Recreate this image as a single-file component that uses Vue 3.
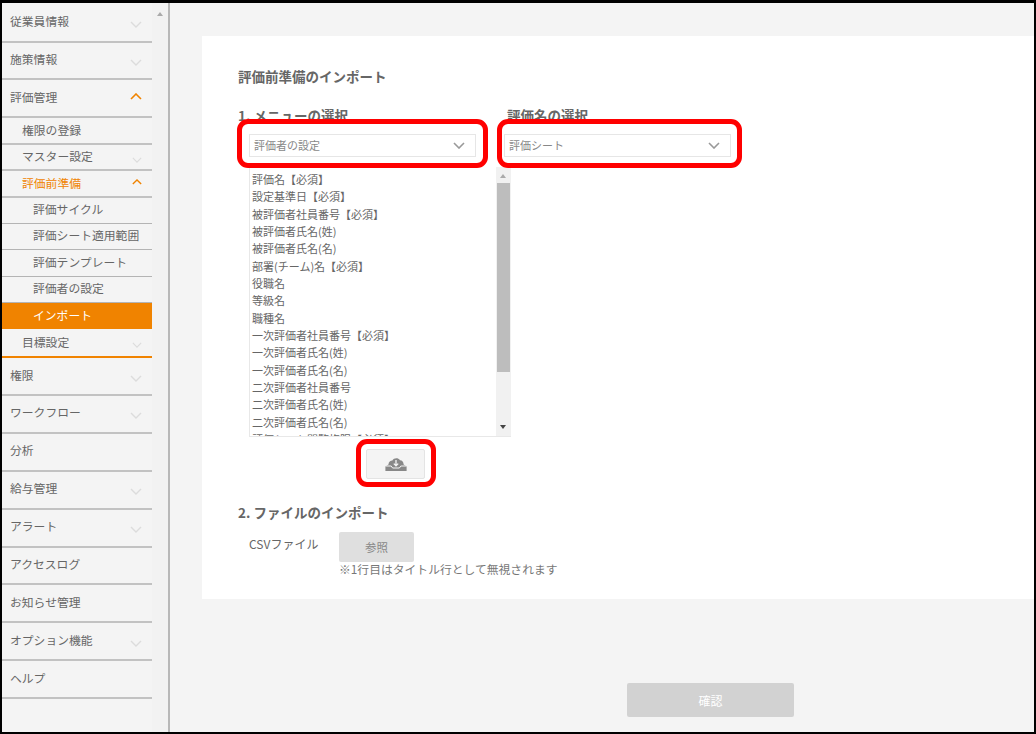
<script setup>
const fields = [
  '評価名【必須】', '設定基準日【必須】', '被評価者社員番号【必須】', '被評価者氏名(姓)', '被評価者氏名(名)',
  '部署(チーム)名【必須】', '役職名', '等級名', '職種名', '一次評価者社員番号【必須】',
  '一次評価者氏名(姓)', '一次評価者氏名(名)', '二次評価者社員番号', '二次評価者氏名(姓)', '二次評価者氏名(名)',
  '評価シート閲覧権限【必須】'
]
const nav = [
  { label: '従業員情報', level: 'top', chev: 'down' },
  { label: '施策情報', level: 'top', chev: 'down' },
  { label: '評価管理', level: 'top', chev: 'up' },
  { label: '権限の登録', level: 'sub' },
  { label: 'マスター設定', level: 'sub', chev: 'down' },
  { label: '評価前準備', level: 'sub', chev: 'up', accent: true },
  { label: '評価サイクル', level: 'leaf' },
  { label: '評価シート適用範囲', level: 'leaf' },
  { label: '評価テンプレート', level: 'leaf' },
  { label: '評価者の設定', level: 'leaf' },
  { label: 'インポート', level: 'leaf', active: true },
  { label: '目標設定', level: 'sub', chev: 'down', closing: true },
  { label: '権限', level: 'top', chev: 'down' },
  { label: 'ワークフロー', level: 'top', chev: 'down' },
  { label: '分析', level: 'top' },
  { label: '給与管理', level: 'top', chev: 'down' },
  { label: 'アラート', level: 'top', chev: 'down' },
  { label: 'アクセスログ', level: 'top' },
  { label: 'お知らせ管理', level: 'top' },
  { label: 'オプション機能', level: 'top', chev: 'down' },
  { label: 'ヘルプ', level: 'top' }
]
</script>

<template>
  <div class="frame">
    <aside class="side">
      <nav class="nav">
        <a
          v-for="item in nav"
          :key="item.label"
          class="nav-item"
          :class="[item.level, { accent: item.accent, active: item.active, closing: item.closing }]"
        >
          <span>{{ item.label }}</span>
          <svg v-if="item.chev === 'down'" class="chev down" viewBox="0 0 12 7" width="12" height="7">
            <path d="M1 1l5 5 5-5" fill="none" stroke="#dcdcdc" stroke-width="1.4" />
          </svg>
          <svg v-if="item.chev === 'up'" class="chev up" viewBox="0 0 12 7" width="12" height="7">
            <path d="M1 6l5-5 5 5" fill="none" stroke="#f08300" stroke-width="1.6" />
          </svg>
        </a>
      </nav>
      <div class="side-scroll"><i class="arrow-up"></i></div>
    </aside>

    <main class="main">
      <section class="panel">
        <h1 class="title">評価前準備のインポート</h1>
        <div class="pick-row">
          <div class="pick first">
            <h2 class="heading">1. メニューの選択</h2>
            <div class="select">
              <span>評価者の設定</span>
              <svg viewBox="0 0 12 7" width="12" height="7"><path d="M1 1l5 5 5-5" fill="none" stroke="#999" stroke-width="1.6" /></svg>
            </div>
          </div>
          <div class="pick second">
            <h2 class="heading">評価名の選択</h2>
            <div class="select">
              <span>評価シート</span>
              <svg viewBox="0 0 12 7" width="12" height="7"><path d="M1 1l5 5 5-5" fill="none" stroke="#999" stroke-width="1.6" /></svg>
            </div>
          </div>
        </div>

        <div class="list">
          <ul class="rows">
            <li v-for="f in fields" :key="f">{{ f }}</li>
          </ul>
          <div class="list-scroll">
            <i class="arrow-up"></i>
            <b class="thumb"></b>
            <i class="arrow-down"></i>
          </div>
        </div>

        <button class="dl" type="button" aria-label="ダウンロード">
          <svg viewBox="0 0 22 14" width="22" height="14">
            <path fill="#888" d="M3.5 7.5C3.5 5 5.5 3.6 7.4 3.6 8.6 1 13 .2 15 3.2c2.2 0 3.6 1.8 3.6 4.3l3 2V14H.4V9.5z" />
            <path fill="none" stroke="#f4f4f4" stroke-width="1" d="M.8 9h5.4l1.4 2h6.8l1.4-2h5.4" />
            <path fill="none" stroke="#f4f4f4" stroke-width="1.3" d="M11 3v5.4M8.8 6.6L11 8.8l2.2-2.2" />
          </svg>
        </button>

        <h2 class="heading second-step">2. ファイルのインポート</h2>
        <div class="file-row">
          <span class="file-label">CSVファイル</span>
          <button class="browse" type="button">参照</button>
        </div>
        <p class="note">※1行目はタイトル行として無視されます</p>
      </section>

      <div class="footer">
        <button class="confirm" type="button">確認</button>
      </div>

      <div class="mark m1"></div>
      <div class="mark m2"></div>
      <div class="mark m3"></div>
    </main>
  </div>
</template>

<style>
html, body { margin: 0; overflow: hidden; background: #000; }
</style>

<style scoped>
.frame {
  box-sizing: border-box;
  width: 1036px;
  height: 734px;
  border: solid #000;
  border-width: 3px 2px 2px 2px;
  display: flex;
  background: #f4f4f4;
  color: #666;
  font-family: "Noto Sans CJK JP", "Noto Sans", sans-serif;
  overflow: hidden;
}
.side { box-sizing: border-box; display: flex; flex: none; width: 168px; border-right: 2px solid #b8b8b8; }
.nav { width: 150px; padding-top: 1.7px; flex: none; }
.nav-item {
  box-sizing: border-box;
  display: flex;
  align-items: center;
  justify-content: space-between;
  font-size: 11.8px;
  color: #666;
  border-bottom: 2px solid #c2c2c2;
}
.top { height: 37.9px; padding: 0 10px 4px 8px; }
.sub { height: 26.4px; padding: 0 10px 2px 20px; }
.leaf { height: 26.4px; padding: 0 10px 4px 31px; border-bottom-width: 1px; border-bottom-color: #b4b4b4; }
.sub .chev { width: 10px; height: 6px; }
.chev.down { position: relative; top: 4px; }
.chev.up { position: relative; top: 0; }
.accent { color: #f08300; }
.active { background: #f08300; color: #fff; border-bottom: none; }
.closing { height: 28.6px; padding-bottom: 3px; border-bottom-color: #f08300; }
.side-scroll { flex: 1; background: #f2f2f2; position: relative; }
.side-scroll .arrow-up { position: absolute; left: 5px; top: 9px; }
.arrow-up, .arrow-down { display: block; width: 0; height: 0; border-left: 3.5px solid transparent; border-right: 3.5px solid transparent; }
.arrow-up { border-bottom: 4px solid #aaa; }
.arrow-down { border-top: 4px solid #444; }

.main { flex: 1; padding-top: 33px; position: relative; min-width: 0; }
.panel { box-sizing: border-box; margin-left: 32px; height: 563px; background: #fff; padding: 31px 0 0 36px; }
.title { margin: 0; font-size: 13.5px; line-height: 18px; font-weight: 700; color: #666; }
.pick-row { display: flex; margin-top: 21px; }
.pick { flex: none; }
.pick.first { width: 269px; }
.heading { margin: 0; font-size: 13.5px; line-height: 18px; font-weight: 700; color: #666; }
.select {
  box-sizing: border-box;
  width: 227px;
  height: 23px;
  margin-top: 10px;
  border: 1px solid #e6e6e6;
  display: flex;
  align-items: center;
  justify-content: space-between;
  padding: 0 10px 2px 4px;
  font-size: 11px;
  color: #888;
}
.select svg { position: relative; top: 1px; }
.first .select { margin-left: 11px; }
.second .select { margin-left: -3px; }
.list {
  box-sizing: border-box;
  display: flex;
  width: 262px;
  height: 270px;
  margin: 10px 0 0 11px;
  border: 1px solid #e8e8e8;
  border-top: none;
  border-right: none;
  overflow: hidden;
}
.rows { flex: 1; list-style: none; margin: 0; padding: 4px 0 0 2px; font-size: 11px; line-height: 17.35px; color: #666; white-space: nowrap; overflow: hidden; }
.list-scroll { flex: none; width: 15px; background: #f1f1f1; position: relative; }
.list-scroll .arrow-up { position: absolute; left: 4px; top: 7px; }
.list-scroll .arrow-down { position: absolute; left: 4px; top: 258px; }
.thumb { position: absolute; left: 1px; top: 16px; width: 13px; height: 189px; background: #bdbdbd; }
.dl {
  box-sizing: border-box;
  display: flex;
  align-items: center;
  justify-content: center;
  width: 59px;
  height: 30px;
  margin: 12px 0 0 128px;
  padding: 0;
  background: #f4f4f4;
  border: 1px solid #e4e4e4;
  border-radius: 2px;
}
.second-step { margin-top: 24px; }
.file-row { display: flex; align-items: flex-start; margin-top: 11px; }
.file-label { width: 90px; margin-left: 11px; font-size: 12px; line-height: 24px; color: #666; }
.browse {
  width: 75px;
  height: 30px;
  padding: 0;
  background: #dfdfdf;
  border: none;
  border-radius: 2px;
  color: #888;
  font: 11.5px "Noto Sans CJK JP", sans-serif;
}
.note { margin: 0 0 0 101px; font-size: 11.8px; line-height: 14px; color: #777; }
.footer { margin: 84px 0 0 457px; }
.confirm {
  display: block;
  width: 167px;
  height: 34px;
  padding: 0;
  background: #d2d2d2;
  border: none;
  border-radius: 2px;
  color: #fff;
  font: 12px "Noto Sans CJK JP", sans-serif;
}
/* Red annotation frames drawn over the screenshot */
.mark { position: absolute; box-sizing: border-box; border: 5px solid #f00; border-radius: 11px; pointer-events: none; }
.m1 { left: 67px; top: 116px; width: 251px; height: 49px; }
.m2 { left: 327px; top: 116px; width: 245px; height: 49px; }
.m3 { left: 186px; top: 436px; width: 80px; height: 48px; }
</style>
